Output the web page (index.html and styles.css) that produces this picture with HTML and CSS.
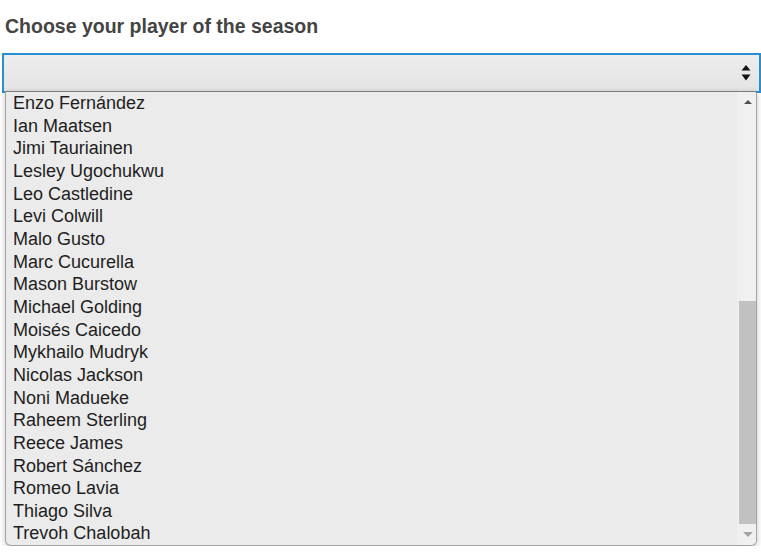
FILE: index.html
```html
<!DOCTYPE html>
<html>
<head>
<meta charset="utf-8">
<link rel="stylesheet" href="styles.css">
</head>
<body>
<div class="page">
  <h1 class="title">Choose your player of the season</h1>
  <div class="select">
    <svg class="select-arrows" width="10" height="18" viewBox="0 0 10 18">
      <polygon points="5,0 9.5,5.5 0.5,5.5" fill="#111"/>
      <polygon points="0.5,9.5 9.5,9.5 5,15.5" fill="#111"/>
    </svg>
  </div>
  <div class="listbox">
    <ul class="options">
      <li>Enzo Fernández</li>
      <li>Ian Maatsen</li>
      <li>Jimi Tauriainen</li>
      <li>Lesley Ugochukwu</li>
      <li>Leo Castledine</li>
      <li>Levi Colwill</li>
      <li>Malo Gusto</li>
      <li>Marc Cucurella</li>
      <li>Mason Burstow</li>
      <li>Michael Golding</li>
      <li>Moisés Caicedo</li>
      <li>Mykhailo Mudryk</li>
      <li>Nicolas Jackson</li>
      <li>Noni Madueke</li>
      <li>Raheem Sterling</li>
      <li>Reece James</li>
      <li>Robert Sánchez</li>
      <li>Romeo Lavia</li>
      <li>Thiago Silva</li>
      <li>Trevoh Chalobah</li>
    </ul>
    <div class="scrollbar">
      <div class="sb-btn sb-up"><span class="tri-up"></span></div>
      <div class="sb-space"></div>
      <div class="sb-thumb"></div>
      <div class="sb-btn sb-down"><span class="tri-down"></span></div>
    </div>
  </div>
</div>
</body>
</html>
```

FILE: styles.css
```css
html, body {
  margin: 0;
  padding: 0;
  background: #ffffff;
}

.page {
  padding: 16px 0 0 2px;
  font-family: "Liberation Sans", Arial, sans-serif;
}

.title {
  margin: 0 0 0 3px;
  font-size: 19.5px;
  font-weight: bold;
  line-height: 21px;
  color: #444444;
}

.select {
  box-sizing: border-box;
  width: 759px;
  height: 40px;
  margin-top: 16px;
  border: 2px solid #2a8fd0;
  background: linear-gradient(#ededed, #e4e4e4);
  display: flex;
  align-items: center;
  justify-content: flex-end;
  padding-right: 8px;
}

.select-arrows {
  display: block;
  margin-top: 2px;
}

.listbox {
  position: relative;
  z-index: 2;
  margin: -2px 0 0 3px;
  width: 752px;
  height: 455px;
  box-sizing: border-box;
  border: 1px solid #a3a3a3;
  border-top-color: #7a7a7a;
  border-radius: 0 3px 6px 6px;
  background: #ebebeb;
  box-shadow: 0 2px 6px rgba(0, 0, 0, 0.22);
  display: flex;
  overflow: hidden;
}

.options {
  flex: 1;
  list-style: none;
  margin: 0;
  padding: 0 0 0 7px;
}

.options li {
  font-size: 18px;
  line-height: 22.65px;
  color: #1e1e1e;
  white-space: nowrap;
}

.scrollbar {
  width: 19px;
  background: #f0f0f0;
  display: flex;
  flex-direction: column;
  align-items: flex-end;
}

.sb-btn {
  width: 19px;
  display: flex;
  justify-content: center;
}

.sb-up {
  height: 19px;
  align-items: center;
}

.sb-down {
  height: 21px;
  align-items: center;
  padding-left: 2px;
  box-sizing: border-box;
}

.sb-space {
  flex: 1;
}

.sb-thumb {
  width: 17px;
  height: 223px;
  background: #c1c1c1;
}

.tri-up {
  width: 0;
  height: 0;
  border-left: 4.5px solid transparent;
  border-right: 4.5px solid transparent;
  border-bottom: 4.5px solid #505050;
  margin-left: 2px;
}

.tri-down {
  width: 0;
  height: 0;
  border-left: 5px solid transparent;
  border-right: 5px solid transparent;
  border-top: 5px solid #a3a3a3;
}
```
